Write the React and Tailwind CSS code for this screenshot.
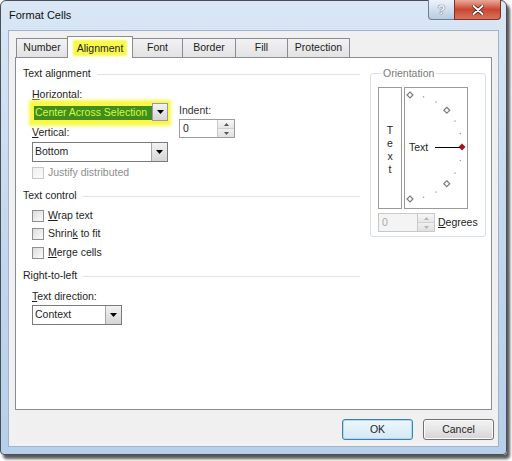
import React from "react";

const font = { fontFamily: '"Liberation Sans", Arial, sans-serif' };

function Arrow() {
  return (
    <svg width="7" height="4" viewBox="0 0 7 4">
      <path d="M0 0h7L3.5 4z" fill="#000" />
    </svg>
  );
}

function DropBtn() {
  return (
    <div className="w-[16px] h-full flex items-center justify-center border-l border-[#a6a6a6] bg-gradient-to-b from-[#f2f2f2] to-[#d5d5d5]">
      <Arrow />
    </div>
  );
}

function Spin({ disabled }) {
  const c = disabled ? "#b5b5b5" : "#555";
  return (
    <div className="w-[17px] h-full flex flex-col border-l border-[#c9c9c9]">
      <div className="flex-1 flex items-center justify-center bg-gradient-to-b from-[#f7f7f7] to-[#e6e6e6] border-b border-[#d0d0d0]">
        <svg width="5" height="3" viewBox="0 0 5 3"><path d="M0 3h5L2.5 0z" fill={c} /></svg>
      </div>
      <div className="flex-1 flex items-center justify-center bg-gradient-to-b from-[#f0f0f0] to-[#e0e0e0]">
        <svg width="5" height="3" viewBox="0 0 5 3"><path d="M0 0h5L2.5 3z" fill={c} /></svg>
      </div>
    </div>
  );
}

function Check({ label, u, disabled }) {
  const i = u ? label.indexOf(u) : -1;
  return (
    <div className="flex items-center h-[16px]">
      <div
        className={
          "w-[12px] h-[12px] border bg-gradient-to-br " +
          (disabled
            ? "border-[#c8c8c8] from-[#f0f0f0] to-[#fbfbfb]"
            : "border-[#8e8f8f] from-[#dcdcdc] to-[#fbfbfb]")
        }
      />
      <span className={"ml-[4px] " + (disabled ? "text-[#8d8d8d]" : "text-[#1e1e1e]")}>
        {i >= 0 ? (
          <>
            {label.slice(0, i)}
            <span className="underline">{label[i]}</span>
            {label.slice(i + 1)}
          </>
        ) : (
          label
        )}
      </span>
    </div>
  );
}

function Header({ children, mt }) {
  return (
    <div className={"flex items-center h-[16px] text-[#1e1e1e] " + mt}>
      <span>{children}</span>
      <div className="flex-1 h-px bg-[#dde3e8] ml-[6px]" />
    </div>
  );
}

function Tab({ label, w, active }) {
  if (active) {
    return (
      <div className={"relative z-10 -ml-px -mb-px h-[22px] bg-white border border-b-0 border-[#898c95] flex items-center justify-center " + w}>
        <span className="bg-[#f8f84a] px-[2px] leading-[12px] shadow-[0_0_2px_2px_#f8f84a]">{label}</span>
      </div>
    );
  }
  return (
    <div className={"-ml-px first:ml-0 h-[19px] border border-b-0 border-[#898c95] bg-gradient-to-b from-[#f2f2f2] to-[#e3e3e3] flex items-center justify-center " + w}>
      {label}
    </div>
  );
}

function Dots() {
  const cx = 5, cy = 59, r = 52;
  const items = [];
  for (let a = 90; a >= -90; a -= 15) {
    const rad = (a * Math.PI) / 180;
    const x = cx + r * Math.cos(rad);
    const y = cy - r * Math.sin(rad);
    if (a === 0) {
      items.push(<path key={a} d={`M${x} ${y - 3.5}l3.5 3.5l-3.5 3.5l-3.5 -3.5z`} fill="#a3141c" />);
    } else if (a % 45 === 0) {
      items.push(<path key={a} d={`M${x} ${y - 3}l3 3l-3 3l-3 -3z`} fill="#fff" stroke="#7d7d7d" strokeWidth="1.2" />);
    } else {
      items.push(<rect key={a} x={x - 0.6} y={y - 0.6} width="1.3" height="1.3" fill="#9a9a9a" />);
    }
  }
  return (
    <svg width="62" height="120" viewBox="0 0 62 120">
      {items}
      <text x="4" y="63" fontSize="10.5" fill="#1e1e1e" fontFamily='"Liberation Sans", Arial, sans-serif'>Text</text>
      <line x1="30" y1="59.5" x2="55" y2="59.5" stroke="#000" strokeWidth="1" />
    </svg>
  );
}

export default function App() {
  return (
    <div className="w-[512px] h-[461px] bg-white text-[10.5px] text-[#1e1e1e]" style={font}>
      <div className="relative w-[507px] h-[455px] flex flex-col border border-[#4a4f55] rounded-t-[6px] rounded-b-[4px] bg-gradient-to-b from-[#d9e7f6] via-[#c4d8ee] to-[#b6cfea] shadow-[3px_4px_3px_rgba(0,0,0,0.65)]">
        {/* title bar */}
        <div className="h-[29px] flex items-center pl-[8px]">
          <span className="text-[11px] text-[#101010]">Format Cells</span>
        </div>
        <div className="absolute top-[-1px] right-[5px] flex">
          <div className="w-[27px] h-[20px] rounded-bl-[4px] border border-t-0 border-[#6f7e91] bg-gradient-to-b from-[#eef3fa] to-[#b9cbe1] flex items-center justify-center text-[13px] font-bold text-[#f5f8fc] [text-shadow:0_0_1px_#4d5a6b,0_0_1px_#4d5a6b]">
            ?
          </div>
          <div className="w-[47px] h-[20px] -ml-px rounded-br-[4px] border border-t-0 border-[#7b3126] bg-gradient-to-b from-[#e9a99b] via-[#c9452f] to-[#d8735f] flex items-center justify-center">
            <svg width="12" height="10" viewBox="0 0 12 10">
              <path d="M1.5 1l9 8M10.5 1l-9 8" stroke="#3a1510" strokeWidth="3.4" strokeLinecap="round" />
              <path d="M1.5 1l9 8M10.5 1l-9 8" stroke="#fff" strokeWidth="2" strokeLinecap="round" />
            </svg>
          </div>
        </div>

        {/* client area */}
        <div className="mx-[7px] flex-1 bg-[#f0f0f0] border border-[#9fb4cc] flex flex-col">
          <div className="mt-[5px] ml-[7px] h-[21px] flex items-end">
            <Tab label="Number" w="w-[52px]" />
            <Tab label="Alignment" w="w-[66px]" active />
            <Tab label="Font" w="w-[51px]" />
            <Tab label="Border" w="w-[54px]" />
            <Tab label="Fill" w="w-[53px]" />
            <Tab label="Protection" w="w-[63px]" />
          </div>

          <div className="ml-[6px] w-[477px] h-[353px] bg-white border border-[#898c95] flex pl-[7px]">
            {/* left column */}
            <div className="w-[337px] flex flex-col">
              <Header mt="mt-[8px]">Text alignment</Header>
              <div className="pl-[9px] flex">
                <div className="flex flex-col">
                  <div className="mt-[4px] h-[16px] leading-[16px]">
                    <span className="underline">H</span>orizontal:
                  </div>
                  <div className="mt-[1px] w-[136px] h-[20px] flex bg-[#f8f84a] shadow-[0_0_3px_3px_#f8f84a]">
                    <div className="flex-1 my-[3px] ml-[2px] bg-[#3f8d1f] text-[#d7f83c] flex items-center pl-[1px]">
                      Center Across Selection
                    </div>
                    <div className="w-[16px] h-[18px] flex items-center justify-center border border-[#9a9a9a] bg-gradient-to-b from-[#f2f2f2] to-[#d5d5d5]">
                      <Arrow />
                    </div>
                  </div>
                  <div className="mt-[1px] h-[16px] leading-[16px]">
                    <span className="underline">V</span>ertical:
                  </div>
                  <div className="mt-[2px] w-[136px] h-[20px] flex border border-[#7a7a7a] bg-white">
                    <div className="flex-1 flex items-center pl-[2px]">Bottom</div>
                    <DropBtn />
                  </div>
                </div>
                <div className="ml-[11px] flex flex-col">
                  <div className="mt-[20px] h-[16px] leading-[16px] text-[#333]">Indent:</div>
                  <div className="mt-[1px] w-[56px] h-[19px] flex border border-[#9c9c9c] bg-white">
                    <div className="flex-1 flex items-center pl-[3px]">0</div>
                    <Spin />
                  </div>
                </div>
              </div>
              <div className="pl-[9px] mt-[3px]">
                <Check label="Justify distributed" disabled />
              </div>

              <Header mt="mt-[7px]">Text control</Header>
              <div className="pl-[9px] flex flex-col">
                <div className="mt-[4px]"><Check label="Wrap text" u="W" /></div>
                <div className="mt-[2px]"><Check label="Shrink to fit" u="k" /></div>
                <div className="mt-[3px]"><Check label="Merge cells" u="M" /></div>
              </div>

              <Header mt="mt-[7px]">Right-to-left</Header>
              <div className="pl-[9px] flex flex-col">
                <div className="mt-[4px] h-[16px] leading-[16px]">
                  <span className="underline">T</span>ext direction:
                </div>
                <div className="mt-[1px] w-[90px] h-[20px] flex border border-[#7a7a7a] bg-white">
                  <div className="flex-1 flex items-center pl-[2px]">Context</div>
                  <DropBtn />
                </div>
              </div>
            </div>

            {/* orientation */}
            <fieldset className="ml-[10px] mt-[7px] w-[113px] h-[172px] border border-[#d5dfe5] rounded-[3px] px-[7px]">
              <legend className="ml-[3px] px-[2px] leading-[16px] text-[#7a7a7a]">Orientation</legend>
              <div className="mt-[6px] flex gap-[2px]">
                <div className="w-[24px] h-[122px] border border-[#9a9a9a] flex flex-col items-center justify-center leading-[13px] pt-[4px]">
                  <span>T</span>
                  <span>e</span>
                  <span>x</span>
                  <span>t</span>
                </div>
                <div className="w-[64px] h-[122px] border border-[#9a9a9a]">
                  <Dots />
                </div>
              </div>
              <div className="mt-[4px] flex items-center">
                <div className="w-[57px] h-[19px] flex border border-[#c8c8c8] bg-[#f4f4f4]">
                  <div className="flex-1 flex items-center pl-[3px] text-[#a8a8a8]">0</div>
                  <Spin disabled />
                </div>
                <span className="ml-[3px]">
                  <span className="underline">D</span>egrees
                </span>
              </div>
            </fieldset>
          </div>

          <div className="mt-[9px] pr-[4px] flex justify-end gap-[10px]">
            <div className="w-[71px] h-[21px] rounded-[3px] border border-[#3c7fb1] bg-gradient-to-b from-[#eef7fc] to-[#d3e8f6] shadow-[inset_0_0_0_1px_#a9dbf6] flex items-center justify-center">
              OK
            </div>
            <div className="w-[71px] h-[21px] rounded-[3px] border border-[#707070] bg-gradient-to-b from-[#f2f2f2] via-[#e6e6e6] to-[#d4d4d4] shadow-[inset_0_0_0_1px_#fbfbfb] flex items-center justify-center">
              Cancel
            </div>
          </div>
        </div>
        <div className="h-[7px]" />
      </div>
    </div>
  );
}
